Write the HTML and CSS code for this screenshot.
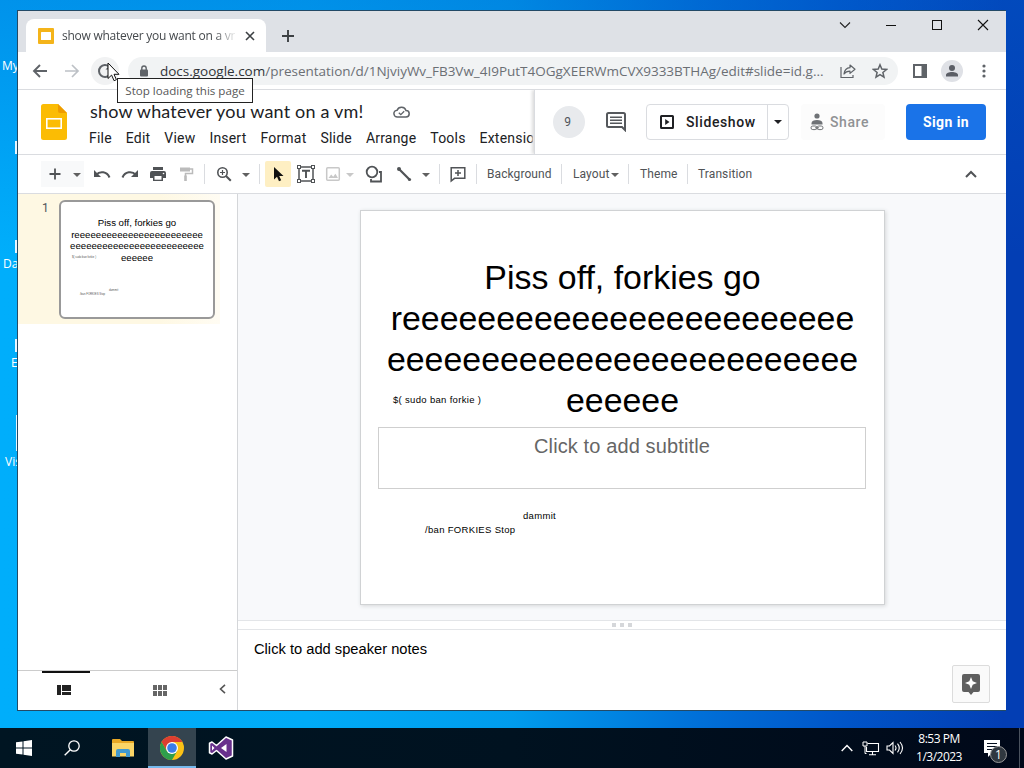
FILE: index.html
```html
<!DOCTYPE html>
<html lang="en">
<head>
    <meta charset="UTF-8">
    <meta name="viewport" content="width=device-width, initial-scale=1.0">
    <title>show whatever you want on a vm! - Google Slides</title>
    <link rel="stylesheet" href="styles.css">
</head>
<body>
    <div class="desktop">
        <!-- shortcuts that stick out from under the window -->
        <div class="shortcut shortcut-my">My</div>
        <div class="shortcut shortcut-da">Da</div>
        <div class="shortcut shortcut-e">E</div>
        <div class="shortcut shortcut-vis">Vis</div>
        <div class="icon-edge edge-one"></div>
        <div class="icon-edge edge-two"></div>
        <div class="icon-edge edge-three"></div>
        <div class="icon-edge edge-four"></div>

        <div class="window">
            <div class="tabstrip">
                <div class="tab">
                    <svg class="favicon" width="16" height="16" viewBox="0 0 16 16"><rect width="16" height="16" rx="1" fill="#f4b41a"/><rect x="3" y="4" width="10" height="8" rx=".5" fill="#fff"/></svg>
                    <span class="tab-title">show whatever you want on a vm</span>
                    <svg width="10" height="10" viewBox="0 0 10 10"><path d="M1 1l8 8M9 1l-8 8" stroke="#3c4043" stroke-width="1.6"/></svg>
                </div>
                <svg class="new-tab" width="14" height="14" viewBox="0 0 14 14"><path d="M7 1v12M1 7h12" stroke="#3c4043" stroke-width="1.9"/></svg>
                <div class="window-buttons">
                    <svg width="46" height="28" viewBox="0 0 46 28"><path d="M18 11.5l5 5 5-5" fill="none" stroke="#222" stroke-width="1.1"/></svg>
                    <svg width="46" height="28" viewBox="0 0 46 28"><path d="M18 14.5h10" stroke="#111"/></svg>
                    <svg width="46" height="28" viewBox="0 0 46 28"><rect x="18.5" y="9.5" width="9" height="9" fill="none" stroke="#111"/></svg>
                    <svg width="46" height="28" viewBox="0 0 46 28"><path d="M18 9l10 10M28 9l-10 10" stroke="#111" stroke-width="1.1"/></svg>
                </div>
            </div>

            <div class="navbar">
                <svg class="nav-back" width="16" height="14" viewBox="0 0 16 14"><path d="M15 7H2M8 1L2 7l6 6" fill="none" stroke="#5f6368" stroke-width="1.9"/></svg>
                <svg class="nav-forward" width="16" height="14" viewBox="0 0 16 14"><path d="M1 7h13M8 1l6 6-6 6" fill="none" stroke="#bdc1c6" stroke-width="1.7"/></svg>
                <div class="reload">
                    <svg width="18" height="18" viewBox="0 0 18 18"><path d="M13 4.500A6 6 0 1 0 13.500 13" fill="none" stroke="#5f6368" stroke-width="2"/><path d="M14.500 2.500v5h-5z" fill="#5f6368"/></svg>
                </div>
                <div class="omnibox">
                    <svg class="lock" width="10" height="12" viewBox="0 0 10 12"><rect x="1" y="4.5" width="8" height="7" rx="1" fill="#5f6368"/><path d="M2.8 5V3.2a2.2 2.2 0 0 1 4.4 0V5" fill="none" stroke="#5f6368" stroke-width="1.4"/></svg>
                    <span class="url"><b>docs.google.com</b>/presentation/d/1NjviyWv_FB3Vw_4I9PutT4OGgXEERWmCVX9333BTHAg/edit#slide=id.g...</span>
                    <svg class="share-page" width="16" height="16" viewBox="0 0 16 16"><path d="M1 4v10.500h12V12" fill="none" stroke="#5f6368" stroke-width="1.200"/><path d="M10 2l5 4.200-5 4.200V8.200C7.500 8.200 5.500 8.800 4 11c.4-3.500 2.500-6 6-6.300z" fill="none" stroke="#5f6368" stroke-width="1.200" stroke-linejoin="round"/></svg>
                    <svg class="star" width="16" height="16" viewBox="0 0 16 16"><path d="M8 1.800l1.800 4.300 4.700.4-3.600 3 1.100 4.600L8 11.700l-4 2.400 1.100-4.600-3.600-3 4.700-.4z" fill="none" stroke="#5f6368" stroke-width="1.5"/></svg>
                </div>
                <div class="nav-actions">
                    <svg width="16" height="16" viewBox="0 0 16 16"><rect x="2" y="2" width="12" height="12" fill="none" stroke="#5f6368" stroke-width="2"/><path d="M9.500 2H15v12H9.500z" fill="#5f6368"/></svg>
                    <svg width="22" height="22" viewBox="0 0 22 22"><circle cx="11" cy="11" r="11" fill="#dfe1e6"/><circle cx="11" cy="8" r="3" fill="#5b5e66"/><path d="M5 16.500v-1.500c0-2 3-3 6-3s6 1 6 3v1.500z" fill="#5b5e66"/></svg>
                    <svg width="16" height="16" viewBox="0 0 16 16"><g fill="#5f6368"><circle cx="8" cy="3" r="1.600"/><circle cx="8" cy="8" r="1.600"/><circle cx="8" cy="13" r="1.600"/></g></svg>
                </div>
            </div>

            <div class="docs-header">
                <svg class="logo" width="26" height="36" viewBox="0 0 26 36"><path d="M2.500 0H17l9 9v24.500a2.500 2.500 0 0 1-2.500 2.500h-21A2.500 2.500 0 0 1 0 33.500v-31A2.500 2.500 0 0 1 2.500 0z" fill="#fbbc04"/><path d="M17 0l9 9h-7a2 2 0 0 1-2-2z" fill="#ee9b00"/><rect x="5.800" y="14.800" width="14.400" height="9.400" fill="none" stroke="#fff" stroke-width="1.600"/></svg>
                <div class="doc-info">
                    <div class="doc-title">
                        <span>show whatever you want on a vm!</span>
                        <svg width="17" height="12" viewBox="0 0 17 12"><path d="M4.500 11a3.400 3.400 0 0 1-.4-6.800A4.700 4.700 0 0 1 13 4.600 3.200 3.200 0 0 1 13 11z" fill="none" stroke="#5f6368" stroke-width="1.500"/><path d="M5.800 6.800l2 1.900 3.400-3.500" fill="none" stroke="#5f6368" stroke-width="1.300"/></svg>
                    </div>
                    <div class="menu">
                        <span>File</span><span>Edit</span><span>View</span><span>Insert</span><span>Format</span><span>Slide</span><span>Arrange</span><span>Tools</span><span>Extensio</span>
                    </div>
                </div>
                <div class="doc-actions">
                    <div class="viewers">9</div>
                    <svg class="comments" width="20" height="20" viewBox="0 0 20 20"><path d="M1 2.500A1.500 1.500 0 0 1 2.500 1h15A1.500 1.500 0 0 1 19 2.500V18l-3-3H2.500A1.500 1.500 0 0 1 1 13.500z" fill="none" stroke="#55585c" stroke-width="2"/><path d="M4 5.200h12M4 8.200h12M4 11.200h12" stroke="#55585c" stroke-width="1.600"/></svg>
                    <div class="slideshow">
                        <div class="slideshow-main">
                            <svg width="14" height="14" viewBox="0 0 14 14"><rect x="1" y="1" width="12" height="12" rx=".5" fill="none" stroke="#202124" stroke-width="2"/><path d="M5.200 4v6l4.300-3z" fill="#202124"/></svg>
                            <span>Slideshow</span>
                        </div>
                        <div class="slideshow-more"><i class="caret dark"></i></div>
                    </div>
                    <div class="share">
                        <svg width="14" height="18" viewBox="0 0 14 18"><circle cx="7" cy="3" r="2.600" fill="#6f7276"/><path d="M1.500 11.500V10c0-2 2.500-3 5.500-3s5.500 1 5.500 3v1.500z" fill="#6f7276"/><rect x="1" y="13" width="6" height="3.600" rx="1.800" fill="none" stroke="#6f7276"/><rect x="7" y="13" width="6" height="3.600" rx="1.800" fill="none" stroke="#6f7276"/><path d="M5 14.800h4" stroke="#6f7276"/></svg>
                        <span>Share</span>
                    </div>
                    <div class="sign-in">Sign in</div>
                </div>
            </div>

            <div class="toolbar">
                <div class="new-slide">
                    <svg width="28" height="26" viewBox="0 0 28 26"><path d="M14 7.500v11M8.500 13h11" stroke="#505356" stroke-width="1.800"/></svg>
                    <i class="caret"></i>
                </div>
                <svg class="undo" width="28" height="26" viewBox="0 0 28 26"><path d="M6 9v7h7z" fill="#505356"/><path d="M8 14c4-4.500 11-3.500 13.500 2.500" fill="none" stroke="#505356" stroke-width="2"/></svg>
                <svg width="28" height="26" viewBox="0 0 28 26"><path d="M22 9v7h-7z" fill="#505356"/><path d="M20 14c-4-4.500-11-3.500-13.500 2.500" fill="none" stroke="#505356" stroke-width="2"/></svg>
                <svg width="28" height="26" viewBox="0 0 28 26"><path d="M9 6h10v3H9z" fill="#505356"/><path d="M8 10h12a2 2 0 0 1 2 2v5h-3v3H9v-3H6v-5a2 2 0 0 1 2-2z" fill="#505356"/><path d="M10.500 15h7v3.700h-7z" fill="#fff"/><circle cx="19.500" cy="12.500" r=".8" fill="#fff"/></svg>
                <svg width="28" height="26" viewBox="0 0 28 26"><path d="M8 6.500h10v4H8z" fill="#bbb"/><path d="M18 8h2.500v4.500h-7v3" fill="none" stroke="#bbb" stroke-width="1.500"/><path d="M12.200 14.500h2.600V20h-2.600z" fill="#bbb"/></svg>
                <div class="sep sep-a"></div>
                <svg width="28" height="26" viewBox="0 0 28 26"><circle cx="12.500" cy="11.500" r="4.700" fill="none" stroke="#505356" stroke-width="1.600"/><path d="M16 15l4.800 4.800" stroke="#505356" stroke-width="2"/><path d="M12.500 9v5M10 11.500h5" stroke="#505356" stroke-width="1.200"/></svg>
                <div class="caret-slot"><i class="caret"></i></div>
                <div class="sep sep-b"></div>
                <div class="pointer-tool">
                    <svg width="26" height="26" viewBox="0 0 26 26"><path d="M9 6v12.500l3-2.800 2 4.500 2.200-1-2-4.200H18.500z" fill="#111"/></svg>
                </div>
                <svg class="textbox-tool" width="28" height="26" viewBox="0 0 28 26"><rect x="7" y="6" width="14" height="14" fill="none" stroke="#505356" stroke-width="1.500"/><path d="M10 9.800h8M14 9.800V17" stroke="#505356" stroke-width="1.900"/><g fill="#fff" stroke="#505356"><rect x="5.500" y="4.500" width="3" height="3"/><rect x="19.500" y="4.500" width="3" height="3"/><rect x="5.500" y="18.500" width="3" height="3"/><rect x="19.500" y="18.500" width="3" height="3"/></g></svg>
                <svg width="26" height="26" viewBox="0 0 26 26"><rect x="6.700" y="6.700" width="12.600" height="12.600" rx="1" fill="none" stroke="#c8c8c8" stroke-width="1.500"/><path d="M8.500 17l2.700-3.500 2 2.200 2.200-3 2.600 4.300z" fill="#c8c8c8"/></svg>
                <div class="caret-slot narrow"><i class="caret light"></i></div>
                <svg class="shape-tool" width="28" height="26" viewBox="0 0 28 26"><circle cx="12" cy="11" r="5.300" fill="none" stroke="#505356" stroke-width="1.800"/><path d="M19 11h2v9.500h-10V18" fill="none" stroke="#505356" stroke-width="1.800"/></svg>
                <svg class="line-tool" width="28" height="26" viewBox="0 0 28 26"><path d="M9 8l10.500 10.500" stroke="#505356" stroke-width="2.200"/><circle cx="9" cy="8" r="2" fill="#505356"/><circle cx="19.500" cy="18.500" r="1.600" fill="#505356"/></svg>
                <div class="caret-slot"><i class="caret"></i></div>
                <div class="sep sep-b"></div>
                <svg class="comment-tool" width="28" height="26" viewBox="0 0 28 26"><path d="M7.200 6.700h13.600v10.600H10.500L7.200 20z" fill="none" stroke="#505356" stroke-width="1.500"/><path d="M14 9v6M11 12h6" stroke="#505356" stroke-width="1.500"/></svg>
                <div class="sep sep-c"></div>
                <span class="tool-text tool-background">Background</span>
                <div class="sep"></div>
                <span class="tool-text tool-layout">Layout<i class="caret"></i></span>
                <div class="sep"></div>
                <span class="tool-text tool-theme">Theme</span>
                <div class="sep"></div>
                <span class="tool-text tool-transition">Transition</span>
                <svg class="collapse" width="12" height="8" viewBox="0 0 12 8"><path d="M1 7l5-5 5 5" fill="none" stroke="#505356" stroke-width="2"/></svg>
            </div>

            <div class="editor">
                <div class="filmstrip">
                    <div class="film-item">
                        <span class="film-number">1</span>
                        <div class="thumb">
                            <div class="thumb-title">Piss off, forkies go<br>reeeeeeeeeeeeeeeeeeeeeeee<br>eeeeeeeeeeeeeeeeeeeeeeeee<br>eeeeee</div>
                            <span class="thumb-note thumb-sudo">$( sudo ban forkie )</span>
                            <span class="thumb-note thumb-dammit">dammit</span>
                            <span class="thumb-note thumb-ban">/ban FORKIES Stop</span>
                        </div>
                    </div>
                    <div class="film-footer">
                        <div class="view-button active"><svg width="14" height="10" viewBox="0 0 14 10"><path d="M0 0h4v10H0zM5 0h9v6H5zM5 7h9v3H5z" fill="#222"/></svg></div>
                        <div class="view-button"><svg width="14" height="11" viewBox="0 0 14 11"><path d="M0 0h4v5H0zM5 0h4v5H5zM10 0h4v5h-4zM0 6h4v5H0zM5 6h4v5H5zM10 6h4v5h-4z" fill="#666"/></svg></div>
                        <svg class="hide-strip" width="7" height="10" viewBox="0 0 7 10"><path d="M6 .8L1.500 5 6 9.200" fill="none" stroke="#555" stroke-width="1.600"/></svg>
                    </div>
                </div>
                <div class="workspace">
                    <div class="canvas">
                        <div class="slide">
                            <div class="slide-title">Piss off, forkies go<br>reeeeeeeeeeeeeeeeeeeeeeee<br>eeeeeeeeeeeeeeeeeeeeeeeee<br>eeeeee</div>
                            <div class="slide-subtitle">Click to add subtitle</div>
                            <span class="note note-sudo">$( sudo ban forkie )</span>
                            <span class="note note-dammit">dammit</span>
                            <span class="note note-ban">/ban FORKIES Stop</span>
                        </div>
                    </div>
                    <div class="splitter"><i></i><i></i><i></i></div>
                    <div class="notes">
                        <span class="notes-text">Click to add speaker notes</span>
                        <div class="explore">
                            <svg width="18" height="21" viewBox="0 0 18 21"><path d="M2 0h14a2 2 0 0 1 2 2v14a2 2 0 0 1-2 2h-4.500L9 21l-2.500-3H2a2 2 0 0 1-2-2V2a2 2 0 0 1 2-2z" fill="#5f5f5f"/><path d="M9 3l1.700 4.300L15 9l-4.300 1.700L9 15l-1.700-4.300L3 9l4.300-1.700z" fill="#fff"/></svg>
                        </div>
                    </div>
                </div>
            </div>
        </div>

        <div class="tooltip">Stop loading this page</div>
        <svg class="cursor" width="13" height="20" viewBox="0 0 13 20"><path d="M1 1v15.500l3.600-3.400 2.500 5.600 2.300-1-2.400-5.400H12z" fill="#fff" stroke="#111"/></svg>
    </div>

    <div class="taskbar">
        <div class="task"><svg width="16" height="16" viewBox="0 0 16 16"><path d="M0 2.300l6.500-.9v6H0zM7.500 1.200L16 0v7.400H7.500zM0 8.500h6.500v6L0 13.700zM7.500 8.500H16V16l-8.500-1.200z" fill="#fff"/></svg></div>
        <div class="task search"><svg width="16" height="16" viewBox="0 0 16 16"><circle cx="10" cy="6" r="5.200" fill="none" stroke="#fff" stroke-width="1.300"/><path d="M6.300 9.700L.7 15.300" stroke="#fff" stroke-width="1.400"/></svg></div>
        <div class="task explorer"><svg width="22" height="18" viewBox="0 0 22 18"><path d="M0 1a1 1 0 0 1 1-1h7l2 2h11a1 1 0 0 1 1 1v14H0z" fill="#e9a825"/><path d="M0 4h22v13.500H0z" fill="#fbd566"/><path d="M4 18v-6a2 2 0 0 1 2-2h10a2 2 0 0 1 2 2v6h-4v-4H8v4z" fill="#4299cf"/></svg></div>
        <div class="task running">
            <svg width="24" height="24" viewBox="0 0 24 24"><circle cx="12" cy="12" r="12" fill="#fbc116"/><path d="M1.600 6A12 12 0 0 1 22.400 6H12l-5.200 9z" fill="#dc3e31"/><path d="M1.600 6l5.200 9L12 18l5.200-3L12 24A12 12 0 0 1 1.600 6z" fill="#2f9e4b"/><circle cx="12" cy="12" r="6" fill="#fff"/><circle cx="12" cy="12" r="4.800" fill="#3b7de8"/></svg>
        </div>
        <div class="task"><svg width="26" height="24" viewBox="0 0 26 24"><path d="M18 1l6.500 3v16L18 23l-9.500-8.500L4 18l-2.500-1.200V7.200L4 6l4.500 3.500z" fill="#68308c" stroke="#fff" stroke-width="1.500" stroke-linejoin="round"/><path d="M18.500 8v8L13 12zM4 9.500v5L6.500 12z" fill="#fff"/></svg></div>
        <div class="tray">
            <svg class="tray-up" width="12" height="8" viewBox="0 0 12 8"><path d="M.7 7L6 1.500 11.300 7" fill="none" stroke="#fff" stroke-width="1.400"/></svg>
            <svg class="tray-net" width="18" height="15" viewBox="0 0 18 15"><path d="M5.500 2.500h11v8H4.500V6M10.500 10.500v3M7 13.800h7" fill="none" stroke="#fff" stroke-width="1.100"/><path d="M1 1h4v4H1zM3 5v7.500h1.500" fill="none" stroke="#fff"/></svg>
            <svg class="tray-volume" width="18" height="14" viewBox="0 0 18 14"><path d="M1 5h2.500L7 1.500v11L3.500 9H1zM9 4.500q2 2.500 0 5M11.500 2.700q3.500 4.300 0 8.600M14 1q5 6 0 12" fill="none" stroke="#fff" stroke-width="1.100"/></svg>
            <div class="clock"><span>8:53 PM</span><span>1/3/2023</span></div>
            <div class="notify">
                <svg width="18" height="17" viewBox="0 0 18 17"><path d="M1 0h16v13H9l-4 4v-4H1z" fill="#fff"/><path d="M4 3.500h10M4 6.500h10M4 9.500h7" stroke="#061020" stroke-width="1.200"/></svg>
                <span class="badge">1</span>
            </div>
            <div class="peek"></div>
        </div>
    </div>
</body>
</html>
```

FILE: styles.css
```css
* {
    box-sizing: border-box;
}
body {
    margin: 0;
    width: 1024px;
    height: 768px;
    overflow: hidden;
    display: flex;
    flex-direction: column;
    font-family: Roboto, "Liberation Sans", sans-serif;
}
svg {
    display: block;
    flex: none;
}

/* Desktop */
.desktop {
    position: relative;
    height: 728px;
    padding: 10px 17px 17px;
    background:
        linear-gradient(180deg, rgba(0, 95, 205, .35), transparent 35%),
        linear-gradient(90deg, #00aefb 0%, #00abf7 30%, #009ced 50%, #0070d8 68%, #0054c8 83%, #033eb4 98%);
}
.shortcut {
    position: absolute;
    color: #fff;
    font-family: "Open Sans", "Noto Sans", sans-serif;
    font-size: 12px;
    line-height: 16px;
    white-space: nowrap;
}
.shortcut-my { left: 2px; top: 58px; }
.shortcut-da { left: 3px; top: 256px; }
.shortcut-e { left: 11px; top: 355px; }
.shortcut-vis { left: 5px; top: 454px; }
.icon-edge {
    position: absolute;
    left: 15px;
    width: 4px;
    height: 13px;
    background: #e8f6ff;
}
.edge-one { top: 141px; }
.edge-two { top: 240px; }
.edge-three { top: 339px; }
.edge-four { top: 415px; height: 36px; left: 16px; }

/* Browser window */
.window {
    position: relative;
    width: 989px;
    height: 701px;
    display: flex;
    flex-direction: column;
    background: #fff;
    border: 1px solid #234a66;
    border-right: none;
}
.tabstrip {
    height: 41px;
    display: flex;
    background: #dee1e6;
    padding-left: 8px;
}
.tab {
    width: 240px;
    height: 33px;
    margin-top: 8px;
    padding: 0 11px 0 12px;
    display: flex;
    align-items: center;
    background: #fff;
    border-radius: 8px 8px 0 0;
}
.tab-title {
    width: 173px;
    margin: 0 10px 0 8px;
    overflow: hidden;
    white-space: nowrap;
    font-family: "Open Sans", "Noto Sans", sans-serif;
    font-size: 12px;
    letter-spacing: -.25px;
    color: #45494d;
    -webkit-mask-image: linear-gradient(90deg, #000 88%, rgba(0, 0, 0, .1));
    mask-image: linear-gradient(90deg, #000 88%, rgba(0, 0, 0, .1));
}
.new-tab {
    margin: 18px 0 0 15px;
}
.window-buttons {
    display: flex;
    margin-left: auto;
}
.navbar {
    height: 38px;
    display: flex;
    align-items: center;
    padding-left: 14px;
    border-bottom: 1px solid #dadce0;
}
.nav-forward {
    margin-left: 16px;
}
.reload {
    width: 28px;
    height: 28px;
    margin-left: 11px;
    display: flex;
    align-items: center;
    justify-content: center;
    background: #f1f2f3;
    border-radius: 50%;
}
.omnibox {
    width: 770px;
    height: 28px;
    margin-left: 9px;
    padding: 0 9px 0 11px;
    display: flex;
    align-items: center;
    background: #f1f3f4;
    border-radius: 14px;
}
.url {
    width: 664px;
    margin-left: 11px;
    white-space: nowrap;
    font-family: "Open Sans", "Noto Sans", sans-serif;
    font-size: 13.5px;
    letter-spacing: -.01px;
    color: #6b6f74;
}
.url b {
    font-weight: normal;
    color: #303337;
}
.share-page {
    margin-left: 16px;
}
.star {
    margin-left: 16px;
}
.nav-actions {
    display: grid;
    grid-template-columns: repeat(3, 32px);
    justify-items: center;
    align-items: center;
    margin-left: 6px;
}

/* Document header */
.docs-header {
    height: 65px;
    display: flex;
    border-bottom: 1px solid #dadce0;
}
.logo {
    margin: 14px 0 0 23px;
}
.doc-info {
    width: 444px;
    margin-left: 22px;
    padding: 9px 0 0 1px;
    overflow: hidden;
}
.doc-title {
    height: 26px;
    display: flex;
    align-items: center;
    gap: 30px;
    white-space: nowrap;
    font-family: Lato, "Open Sans", sans-serif;
    font-size: 18px;
    line-height: 24px;
    letter-spacing: .18px;
    color: #202124;
}
.doc-title span {
    padding-bottom: 2px;
}
.menu {
    display: flex;
    gap: 14px;
    height: 26px;
    line-height: 26px;
    margin-left: -1px;
    font-size: 14px;
    letter-spacing: .2px;
    color: #202124;
}
.doc-actions {
    flex: 1;
    display: flex;
    align-items: center;
    margin-left: 1px;
    padding-left: 18px;
    background: #fff;
    border-left: 1px solid #dadce0;
    box-shadow: -2px 0 3px #ddd;
    clip-path: inset(0 0 0 -8px);
}
.viewers {
    width: 32px;
    height: 32px;
    padding-right: 3px;
    line-height: 32px;
    text-align: center;
    border-radius: 50%;
    background: #e8eaed;
    color: #50545a;
    font-size: 12px;
}
.comments {
    margin-left: 21px;
}
.slideshow {
    width: 143px;
    height: 36px;
    margin-left: 20px;
    display: flex;
    border: 1px solid #dadce0;
    border-radius: 4px;
    font-weight: 500;
    font-size: 14px;
    letter-spacing: .6px;
    color: #202124;
}
.slideshow-main {
    flex: 1;
    display: flex;
    align-items: center;
    gap: 12px;
    padding-left: 13px;
}
.slideshow-more {
    width: 21px;
    display: flex;
    align-items: center;
    justify-content: center;
    border-left: 1px solid #dadce0;
}
.share {
    width: 84px;
    height: 36px;
    margin-left: 12px;
    padding-left: 9px;
    display: flex;
    align-items: center;
    gap: 6px;
    background: #fcfcfc;
    border-radius: 4px;
    font-weight: 500;
    font-size: 14px;
    letter-spacing: .6px;
    color: #909295;
}
.sign-in {
    width: 80px;
    height: 36px;
    line-height: 36px;
    margin-left: 21px;
    text-align: center;
    border-radius: 4px;
    background: #1a73e8;
    color: #fff;
    font-weight: 700;
    font-size: 14px;
    letter-spacing: .4px;
}

/* Toolbar */
.toolbar {
    height: 39px;
    display: flex;
    align-items: center;
    padding-left: 23px;
    border-bottom: 1px solid #dadce0;
}
.caret {
    width: 0;
    height: 0;
    margin-top: 2px;
    border: 4px solid transparent;
    border-top-color: #606060;
    border-bottom: none;
}
.caret.dark {
    border-top-color: #202124;
    margin-top: 0;
}
.caret.light {
    border-top-color: #c8c8c8;
}
.new-slide {
    width: 43px;
    height: 26px;
    margin-right: 4px;
    display: flex;
    align-items: center;
    gap: 4px;
    background: #f8f9fa;
}
.caret-slot {
    width: 16px;
    display: flex;
    justify-content: center;
}
.caret-slot.narrow {
    width: 8px;
}
.sep {
    width: 1px;
    height: 20px;
    background: #dadce0;
}
.sep-a { margin: 0 5px 0 4px; }
.sep-b { margin: 0 5px; }
.sep-c { margin-left: 4px; }
.pointer-tool {
    background: #feefc3;
    border-radius: 2px;
}
.textbox-tool { margin-left: 1px; }
.shape-tool { margin-left: 6px; }
.line-tool { margin-left: 2px; }
.comment-tool { margin-left: -1px; }
.tool-text {
    font-size: 12px;
    letter-spacing: .1px;
    color: #505356;
    padding-left: 10px;
}
.tool-background {
    width: 84px;
    letter-spacing: .08px;
}
.tool-layout {
    width: 66px;
    padding-left: 11px;
    display: flex;
    align-items: center;
    gap: 2px;
}
.tool-theme { width: 58px; padding-left: 11px; }
.collapse {
    margin: 0 29px 0 auto;
}

/* Editor */
.editor {
    flex: 1;
    display: flex;
    min-height: 0;
}
.filmstrip {
    width: 220px;
    display: flex;
    flex-direction: column;
    justify-content: space-between;
    border-right: 1px solid #d4d6d9;
}
.film-item {
    width: 202px;
    height: 130px;
    display: flex;
    padding-top: 6px;
    background: linear-gradient(90deg, #fef8e3 70%, #fffcf3);
}
.film-number {
    width: 41px;
    padding-left: 24px;
    font-size: 12px;
    line-height: 16px;
    color: #50545a;
}
.thumb {
    position: relative;
    width: 156px;
    height: 119px;
    padding-top: 15px;
    background: #fff;
    border: 2px solid #999;
    border-radius: 6px;
}
.thumb-title {
    text-align: center;
    font-family: "Liberation Sans", Arial, sans-serif;
    font-size: 9.65px;
    line-height: 11.7px;
    white-space: nowrap;
    color: #000;
}
.thumb-note {
    position: absolute;
    font-family: "Liberation Sans", Arial, sans-serif;
    font-size: 2.8px;
    line-height: 4px;
    white-space: nowrap;
    color: #555;
}
.thumb-sudo { left: 11px; top: 53px; }
.thumb-dammit { left: 48px; top: 86px; }
.thumb-ban { left: 19px; top: 90px; }
.film-footer {
    height: 40px;
    display: flex;
    align-items: center;
    border-top: 1px solid #ccc;
    padding-left: 24px;
}
.view-button {
    width: 48px;
    height: 39px;
    display: flex;
    align-items: center;
    justify-content: center;
    margin-right: 48px;
    padding: 0 4px 3px 0;
}
.view-button + .view-button {
    margin-right: 0;
    padding-bottom: 0;
}
.view-button.active {
    border-top: 2px solid #111;
}
.hide-strip {
    margin: 0 0 3px 33px;
}
.workspace {
    flex: 1;
    display: flex;
    flex-direction: column;
}
.canvas {
    height: 426px;
    padding: 17px 0 0 123px;
    background: #f8f9fb;
}
.slide {
    position: relative;
    width: 523px;
    height: 393px;
    padding: 46px 17px 0;
    background: #fff;
    box-shadow: 0 0 0 1px #d0d2d4, 1px 1px 4px 1px #d5d7d9;
    font-family: "Liberation Sans", Arial, sans-serif;
}
.slide-title {
    text-align: center;
    font-size: 33.9px;
    line-height: 41px;
    white-space: nowrap;
    color: #000;
}
.slide-subtitle {
    width: 488px;
    height: 62px;
    margin-top: 6px;
    padding-top: 7px;
    border: 1px solid #cfcfcf;
    text-align: center;
    font-size: 20px;
    line-height: 23px;
    letter-spacing: .12px;
    color: #666;
}
.note {
    position: absolute;
    font-size: 9.5px;
    line-height: 12px;
    letter-spacing: .32px;
    white-space: nowrap;
    color: #000;
}
.note-sudo { left: 32px; top: 183px; }
.note-dammit { left: 162px; top: 299px; }
.note-ban { left: 64px; top: 313px; }
.splitter {
    height: 10px;
    display: flex;
    align-items: center;
    justify-content: center;
    gap: 4px;
    background: #fff;
    border-top: 1px solid #e3e5e8;
    border-bottom: 1px solid #e3e5e8;
}
.splitter i {
    width: 4px;
    height: 4px;
    background: #d5d7da;
}
.notes {
    flex: 1;
    display: flex;
    justify-content: space-between;
    padding: 10px 16px 0;
}
.notes-text {
    font-family: "Liberation Sans", Arial, sans-serif;
    font-size: 14.7px;
    line-height: 18px;
    color: #000;
}
.explore {
    width: 38px;
    height: 38px;
    margin-top: 25px;
    display: flex;
    align-items: center;
    justify-content: center;
    background: #fafafa;
    border: 1px solid #dcdcdc;
    border-radius: 2px;
}

/* Pointer and its tooltip */
.tooltip {
    position: absolute;
    left: 117px;
    top: 78px;
    width: 136px;
    height: 25px;
    line-height: 23px;
    text-align: center;
    white-space: nowrap;
    background: #fff;
    border: 1px solid #222;
    font-family: "Open Sans", "Noto Sans", sans-serif;
    font-size: 11.6px;
    color: #575757;
}
.cursor {
    position: absolute;
    left: 107px;
    top: 62px;
}

/* Taskbar */
.taskbar {
    height: 40px;
    display: flex;
    background: linear-gradient(90deg, #001522, #001220 50%, #000819);
}
.task {
    width: 49px;
    display: flex;
    align-items: center;
    justify-content: center;
}
.task:first-child {
    width: 48px;
}
.search {
    padding-right: 2px;
}
.explorer {
    width: 51px;
}
.running {
    width: 48px;
    background: #34444f;
    border-top: 2px solid #34444f;
    border-bottom: 2px solid #76b9ed;
}
.tray {
    flex: 1;
    display: flex;
    align-items: center;
    justify-content: flex-end;
    color: #fff;
    font-family: "Open Sans", "Noto Sans", sans-serif;
}
.tray-net { margin-left: 9px; }
.tray-volume { margin-left: 6px; }
.clock {
    width: 62px;
    margin-left: 4px;
    display: flex;
    flex-direction: column;
    align-items: center;
    font-size: 12px;
    line-height: 18px;
    letter-spacing: -.5px;
}
.notify {
    position: relative;
    margin-left: 13px;
}
.badge {
    position: absolute;
    left: 7px;
    top: 6px;
    width: 17px;
    height: 17px;
    line-height: 15px;
    text-align: center;
    border-radius: 50%;
    border: 1px solid #999;
    background: #303840;
    font-size: 12px;
}
.peek {
    width: 1px;
    height: 40px;
    margin: 0 4px 0 18px;
    background: #4a525e;
}
```
